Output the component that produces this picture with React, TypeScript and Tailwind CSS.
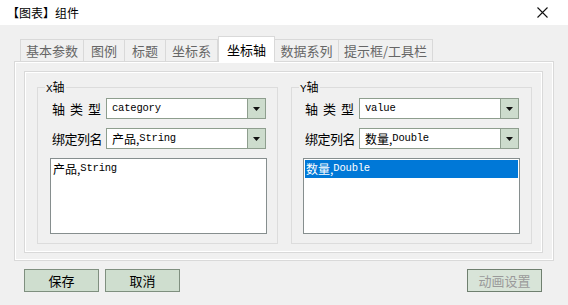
import React from 'react';

const cjk = { fontFamily: '"Microsoft YaHei", "Noto Sans CJK SC", sans-serif' };
const mono = { fontFamily: '"Liberation Mono", "Noto Sans CJK SC", monospace' };

const tabs = ['基本参数', '图例', '标题', '坐标系', '坐标轴', '数据系列', '提示框/工具栏'];
const tabWidths = ['w-[64px]', 'w-[42px]', 'w-[42px]', 'w-[53px]', 'w-[57px]', 'w-[65px]', 'w-[95px]'];

function MixedText({ cn, en }: { cn: string; en: string }) {
  return (
    <span className="flex items-center whitespace-nowrap">
      <span className="text-[12px]" style={cjk}>{cn}</span>
      <span className="text-[10.5px] tracking-[-0.2px]" style={mono}>{en}</span>
    </span>
  );
}

function Combo({ children }: { children: React.ReactNode }) {
  return (
    <div className="flex h-[21px] w-[160px] border border-[#8e9e8e] bg-white">
      <div className="flex flex-1 items-center pl-[5px] text-black">{children}</div>
      <div className="flex w-[18px] items-center justify-center border-l border-[#8e9e8e] bg-[#cddccd]">
        <svg width="7" height="4" viewBox="0 0 7 4"><path d="M0 0h7L3.5 4z" fill="#111" /></svg>
      </div>
    </div>
  );
}

function AxisGroup({ title, type, col, selected, pad }: { title: string; type: string; col: [string, string]; selected?: boolean; pad: 'x' | 'y' }) {
  return (
    <div className="relative flex h-[157px] w-[241px] flex-col border border-[#dcdcdc]">
      <span className="absolute left-[7px] top-[-9px] bg-[#f0f0f0] px-[1px] text-[12px] leading-[16px] text-black" style={cjk}>
        <span style={mono} className="text-[11px]">{title[0]}</span>{title.slice(1)}
      </span>
      <div className={pad === 'x' ? 'flex flex-col pl-[14px] pt-[10px]' : 'flex flex-col pl-[13px] pt-[10px]'}>
        <div className="flex items-center">
          <span className="mr-[5px] flex w-[49px] justify-between text-[13px] text-black" style={cjk}>
            <span>轴</span><span>类</span><span>型</span>
          </span>
          <Combo><span className="text-[10.5px] tracking-[-0.2px]" style={mono}>{type}</span></Combo>
        </div>
        <div className="mt-[9px] flex items-center">
          <span className="w-[54px] text-[13px] tracking-[-0.5px] text-black" style={cjk}>绑定列名</span>
          <Combo><MixedText cn={col[0]} en={col[1]} /></Combo>
        </div>
      </div>
      <div className={pad === 'x' ? 'ml-[12px] mt-[9px] h-[76px] w-[217px] border border-[#868e8e] bg-white p-[1px]' : 'ml-[11px] mt-[9px] h-[76px] w-[217px] border border-[#868e8e] bg-white p-[1px]'}>
        <div className={selected ? 'flex h-[18px] items-center bg-[#0078d7] pl-[1px] text-white' : 'flex h-[18px] items-center pl-[1px] text-black'}>
          <MixedText cn={col[0]} en={col[1]} />
        </div>
      </div>
    </div>
  );
}

export default function App() {
  return (
    <div className="flex h-[305px] w-[568px] flex-col overflow-hidden bg-[#f0f0f0]" style={cjk}>
      <div className="flex h-[25px] items-center justify-between bg-white pl-[7px] pr-[20px]">
        <span className="text-[12px] text-black">【图表】组件</span>
        <svg width="11" height="11" viewBox="0 0 11 11"><path d="M0.5 0.5l10 10M10.5 0.5l-10 10" stroke="#111" strokeWidth="1.1" /></svg>
      </div>

      <div className="mt-[11px] flex h-[25px] items-end pl-[20px]">
        {tabs.map((t, i) =>
          i === 4 ? (
            <div key={t} className={`relative z-10 -mb-[1px] flex h-[26px] ${tabWidths[i]} items-center justify-center border border-b-0 border-[#d9d9d9] bg-white text-[13px] text-black`}>
              {t}
            </div>
          ) : (
            <div key={t} className={`flex h-[22px] ${tabWidths[i]} items-center justify-center border border-b-0 border-[#d9d9d9] text-[13px] text-[#666] ${i > 0 ? '-ml-[1px]' : ''}`}>
              {t}
            </div>
          )
        )}
      </div>

      <div className="ml-[14px] h-[200px] w-[540px] border border-[#d9d9d9]">
        <div className="h-full w-full border border-white p-[8px]">
          <div className="h-[182px] w-[519px] border border-[#d9d9d9]">
            <div className="flex h-full w-full gap-[13px] border border-white pl-[11px] pt-[14px]">
              <AxisGroup title="X轴" type="category" col={['产品,', 'String']} pad="x" />
              <AxisGroup title="Y轴" type="value" col={['数量,', 'Double']} selected pad="y" />
            </div>
          </div>
        </div>
      </div>

      <div className="mt-[8px] flex px-[24px]">
        <button className="h-[23px] w-[75px] border border-[#7f8f7f] bg-[#cfdecf] text-[13px] text-black">保存</button>
        <button className="ml-[6px] h-[23px] w-[75px] border border-[#7f8f7f] bg-[#cfdecf] text-[13px] text-black">取消</button>
        <button className="ml-auto mr-[2px] h-[23px] w-[75px] border border-[#6f7f6f] bg-[#d8e4d8] text-[13px] text-[#9a9a9a]">动画设置</button>
      </div>
    </div>
  );
}
